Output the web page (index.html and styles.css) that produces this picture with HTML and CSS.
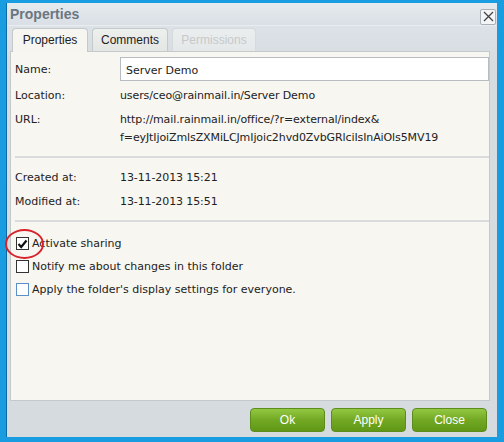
FILE: index.html
```html
<!DOCTYPE html>
<html>

<head>
  <title>Properties</title>
  <link rel="stylesheet" href="styles.css">
</head>

<body>
  <div class="window">
    <div class="titlebar">
      <span class="title">Properties</span>
      <span class="close">
        <svg width="11" height="11" viewBox="0 0 11 11">
          <path d="M1 1 L10 10 M10 1 L1 10" stroke="#444" stroke-width="1.3" fill="none" />
        </svg>
      </span>
    </div>

    <div class="tabs">
      <div class="tab active">Properties</div>
      <div class="tab">Comments</div>
      <div class="tab disabled">Permissions</div>
    </div>

    <div class="panel">
      <div class="section">
        <div class="row">
          <span class="label">Name:</span>
          <input type="text" class="name-input" value="Server Demo">
        </div>
        <div class="row">
          <span class="label">Location:</span>
          <span class="value">users/ceo@rainmail.in/Server Demo</span>
        </div>
        <div class="row">
          <span class="label">URL:</span>
          <span class="value">http://mail.rainmail.in/office/?r=external/index&amp;<br>f=eyJtIjoiZmlsZXMiLCJmIjoic2hvd0ZvbGRlciIsInAiOls5MV19</span>
        </div>
      </div>

      <div class="section">
        <div class="row">
          <span class="label">Created at:</span>
          <span class="value">13-11-2013 15:21</span>
        </div>
        <div class="row">
          <span class="label">Modified at:</span>
          <span class="value">13-11-2013 15:51</span>
        </div>
      </div>

      <div class="section checks">
        <label class="check">
          <span class="box checked">
            <svg width="11" height="10" viewBox="0 0 11 10">
              <path d="M1.5 5 L4.2 8 L9.5 1.5" stroke="#111" stroke-width="2.2" fill="none" />
            </svg>
          </span>
          Activate sharing
          <span class="mark"></span>
        </label>
        <label class="check">
          <span class="box"></span>
          Notify me about changes in this folder
        </label>
        <label class="check">
          <span class="box blue"></span>
          Apply the folder's display settings for everyone.
        </label>
      </div>
    </div>

    <div class="footer">
      <button class="btn">Ok</button>
      <button class="btn">Apply</button>
      <button class="btn">Close</button>
    </div>
  </div>
</body>

</html>
```

FILE: styles.css
```css
body {
  margin: 0;
  background-color: #1a9ce0;
  font-family: "DejaVu Sans", Tahoma, sans-serif;
  font-size: 11px;
  color: #222;
}

.window {
  margin: 3px 7px 5px 6px;
  height: 434px;
  background: linear-gradient(#dfe5ea, #d6dce0 60px, #d6dbdf);
  border-left: 1px solid #0d6aa8;
  box-sizing: border-box;
  display: flex;
  flex-direction: column;
}

.titlebar {
  height: 22px;
  display: flex;
  align-items: center;
  justify-content: space-between;
  padding: 0 1px 0 3px;
  background: linear-gradient(#e6ebef, #d9dfe4);
  border-bottom: 1px solid #e8edf0;
}

.title {
  font-family: "Liberation Sans", Arial, sans-serif;
  font-weight: bold;
  font-size: 14px;
  color: #6b7681;
}

.close {
  width: 14px;
  height: 14px;
  margin-top: 5px;
  border: 1px solid #a9b1b8;
  border-radius: 2px;
  background: #f3f5f6;
  display: flex;
  align-items: center;
  justify-content: center;
}

.tabs {
  display: flex;
  gap: 4px;
  padding: 2px 0 0 5px;
  margin-right: 7px;
}

.tab {
  width: 74px;
  height: 22px;
  line-height: 22px;
  text-align: center;
  font-family: "Liberation Sans", Arial, sans-serif;
  font-size: 12px;
  color: #222;
  background: linear-gradient(#eef0ee, #e4e6e3);
  border: 1px solid #c4c9cc;
  border-bottom: none;
  border-radius: 4px 4px 0 0;
}

.tab.active {
  background: #f6f5f0;
  height: 23px;
  margin-bottom: -1px;
  position: relative;
}

.tab.disabled {
  width: 82px;
  color: #c6c9cb;
  background: linear-gradient(#ebeeee, #e5e8e8);
  border-color: #d5dadc;
}

.panel {
  flex: 1;
  margin: 0 7px 0 3px;
  background: #f7f6f1;
  border: 1px solid #c4c9cc;
  padding: 0 0 0 4px;
}

.section {
  padding: 8px 0 9px;
  border-bottom: 2px solid #d9dbdc;
}

.row {
  display: flex;
  align-items: flex-start;
  line-height: 18px;
  margin-bottom: 5px;
}

.row:last-child {
  margin-bottom: 0;
}

.label {
  width: 105px;
  flex: none;
  padding-top: 1px;
}

.value {
  padding-top: 1px;
  letter-spacing: -0.1px;
}

.name-input {
  flex: 1;
  height: 24px;
  box-sizing: border-box;
  margin: -3px 0 0 0;
  border: 1px solid #b7bcc0;
  background: #fff;
  font-family: "DejaVu Sans", Tahoma, sans-serif;
  font-size: 11px;
  color: #222;
  padding: 2px 5px 0;
}

.section + .section {
  padding-top: 10px;
}

.checks {
  border-bottom: none;
}

.section + .checks {
  padding-top: 10px;
}

.check {
  display: flex;
  align-items: center;
  gap: 3px;
  height: 23px;
  position: relative;
}

.box {
  width: 11px;
  height: 11px;
  border: 1px solid #333;
  background: #fff;
  display: flex;
  align-items: center;
  justify-content: center;
  margin-left: 1px;
}

.box.blue {
  border-color: #5a8fc8;
}

.mark {
  position: absolute;
  left: -10px;
  top: -3px;
  width: 35px;
  height: 26px;
  border: 2px solid #d8232a;
  border-radius: 50%;
}

.footer {
  height: 36px;
  display: flex;
  justify-content: flex-end;
  align-items: center;
  gap: 6px;
  padding: 1px 10px 0 0;
  box-sizing: border-box;
}

.btn {
  width: 75px;
  height: 24px;
  border: 1px solid #5b8c1c;
  border-radius: 4px;
  background: linear-gradient(#93c843, #72a823 50%, #609816);
  color: #fff;
  font-family: "Liberation Sans", Arial, sans-serif;
  font-size: 12px;
  cursor: pointer;
}
```
